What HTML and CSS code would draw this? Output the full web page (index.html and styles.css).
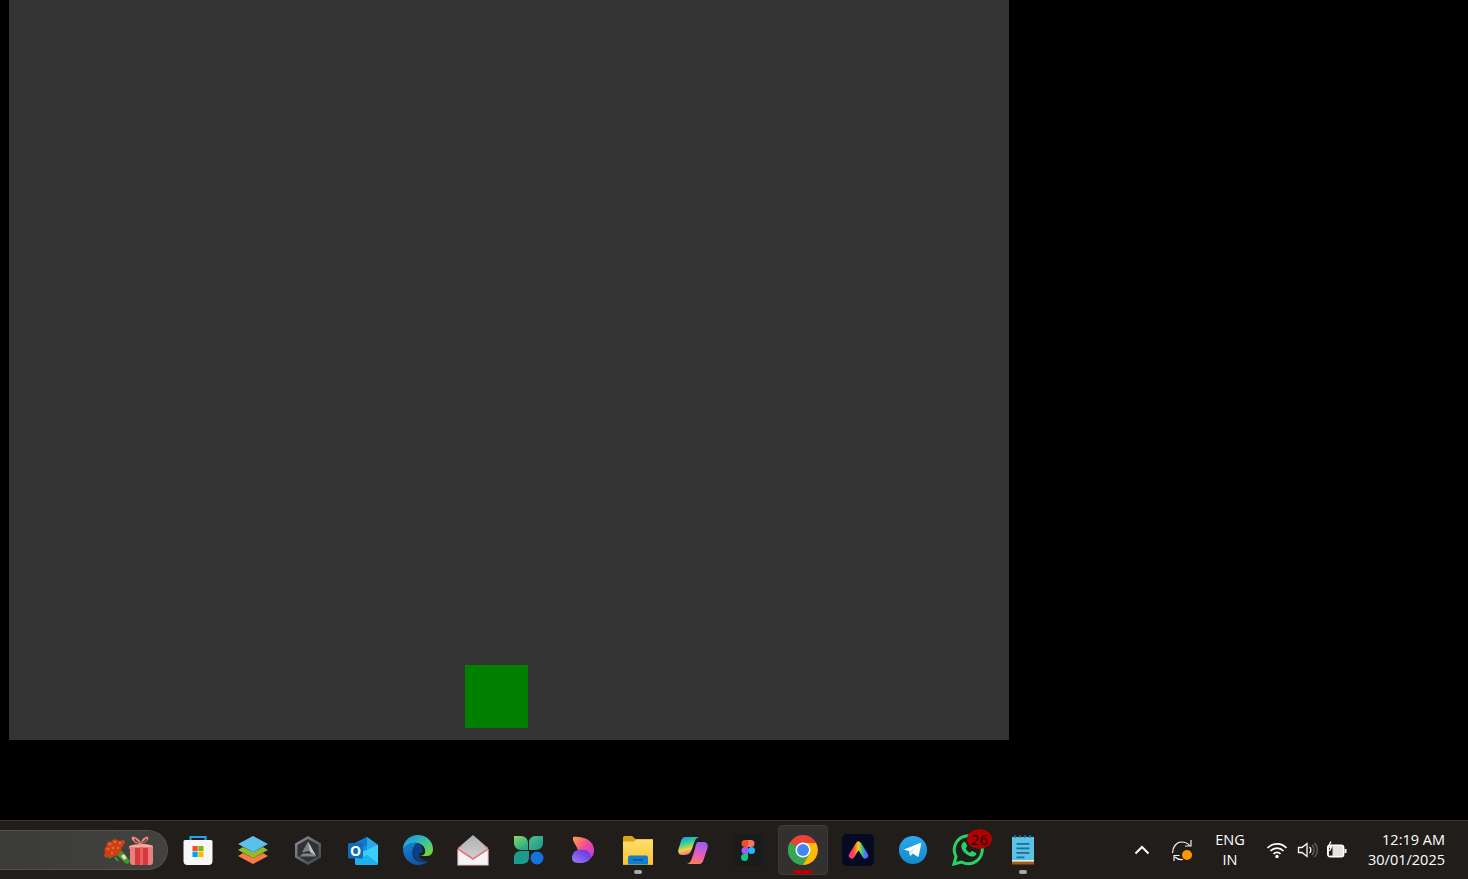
FILE: index.html
```html
<!DOCTYPE html>
<html lang="en">
<head>
<meta charset="utf-8">
<title>Desktop</title>
<link rel="stylesheet" href="styles.css">
</head>
<body>
<main class="screen">
  <div class="stage"><div class="player"></div></div>
</main>
<footer class="taskbar">
  <div class="search">
    <svg class="search-art" width="52" height="30" viewBox="0 0 52 30">
      <path d="M14 19l6-3 8 10 -2 3-3-1z" fill="#3f9b2f"/>
      <path d="M19 21l3-2 3 4-3 2z" fill="#efdcb4"/>
      <path d="M13 22l3 4M10 21l-3 2" stroke="#3f9b2f" stroke-width="2"/>
      <g fill="#cf3f1a">
        <circle cx="8" cy="10" r="3.500"/><circle cx="13" cy="8" r="3.700"/><circle cx="18" cy="9" r="3.500"/>
        <circle cx="6" cy="15" r="3.500"/><circle cx="11" cy="14" r="3.700"/><circle cx="16" cy="14" r="3.500"/>
        <circle cx="5" cy="20" r="2.800"/><circle cx="10" cy="19" r="3"/><circle cx="14" cy="18" r="2.800"/><circle cx="21" cy="7" r="2"/>
      </g>
      <g fill="#ee6a1f"><circle cx="8" cy="9" r="1.300"/><circle cx="13" cy="7" r="1.300"/><circle cx="18" cy="8" r="1.300"/><circle cx="6" cy="14" r="1.300"/><circle cx="11" cy="13" r="1.300"/><circle cx="16" cy="13" r="1.300"/><circle cx="10" cy="18" r="1.200"/></g>
      <path d="M39 8c-2-5-7-7-9-6-1 1 0 6 8 7 8-1 9-6 8-7-2-1-6 1-7 6z" fill="#e88f8a"/>
      <path d="M33 3c1 2 4 4 5 5-3 0-5-1-6-3zM44 3c-1 2-4 4-5 5 3 0 5-1 6-3z" fill="#8e3f3c"/>
      <path d="M27 11c5-2 18-3 24 0l-.500 3h-23z" fill="#f4a8a2"/>
      <path d="M28 12h23v15a3 3 0 0 1-3 3H31a3 3 0 0 1-3-3z" fill="#ea7f7c"/>
      <rect x="33" y="13" width="13" height="17" fill="#d63a3e"/>
      <rect x="38" y="12" width="3" height="18" fill="#e9605f"/>
    </svg>
  </div>
  <nav class="apps">
    <div class="app">
      <svg class="icon" width="32" height="32" viewBox="0 0 32 32">
        <path d="M8.500 7V3h15v4" fill="none" stroke="#1ea7e8" stroke-width="2"/>
        <path d="M3 6h26a1.500 1.500 0 0 1 1.500 1.500V27a4 4 0 0 1-4 4h-21a4 4 0 0 1-4-4V7.500A1.500 1.500 0 0 1 3 6z" fill="#f7f7f7"/>
        <rect x="10.500" y="12" width="5.200" height="5.200" fill="#f25022"/><rect x="16.300" y="12" width="5.200" height="5.200" fill="#7fba00"/>
        <rect x="10.500" y="17.800" width="5.200" height="5.200" fill="#00a4ef"/><rect x="16.300" y="17.800" width="5.200" height="5.200" fill="#ffb900"/>
      </svg>
    </div>
    <div class="app">
      <svg class="icon" width="32" height="32" viewBox="0 0 32 32">
        <path d="M1 22l5-3 10 5 10-5 5 3-15 8z" fill="#f97a47"/>
        <path d="M1 16l5-3 10 5 10-5 5 3-15 8z" fill="#8fbb2f"/>
        <path d="M16 2l15 8-15 8L1 10z" fill="#5cc0ec"/>
      </svg>
    </div>
    <div class="app">
      <svg class="icon" width="32" height="32" viewBox="0 0 32 32">
        <defs><linearGradient id="hx" x1="0" y1="0" x2="1" y2="1"><stop offset="0" stop-color="#8e9196"/><stop offset="0.600" stop-color="#5c5f64"/><stop offset="1" stop-color="#3c3e42"/></linearGradient></defs>
        <path d="M16 2l13 7.500v14L16 31 3 23.500v-14z" fill="url(#hx)"/>
        <path d="M16 5l10.500 6v11L16 28 5.500 22V11z" fill="#2f3135"/>
        <path d="M16 7.500l8 14.500-7-5-7 1.500z" fill="#7d8085"/>
        <path d="M16 7.500l8 14.500-6-4z" fill="#c4c6c9"/>
        <path d="M7.500 22.500H24l-3.500-3H11z" fill="#808388"/>
      </svg>
    </div>
    <div class="app">
      <svg class="icon" width="32" height="32" viewBox="0 0 32 32">
        <path d="M8 9L20 3l11 8v9H8z" fill="#1490df"/>
        <path d="M20 3l11 8v7H20z" fill="#28a8ea"/>
        <path d="M8 9l12-6v8L8 17z" fill="#0f78d4"/>
        <path d="M8 21l23-10v18a2 2 0 0 1-2 2H10a2 2 0 0 1-2-2z" fill="#3ccdf6"/>
        <path d="M8 26l12-5 11 8a2 2 0 0 1-2 2H10a2 2 0 0 1-2-2z" fill="#1fb0ec"/>
        <rect x="1" y="9" width="15" height="15.500" rx="1.500" fill="#0f6cbd"/>
        <text class="ol" x="8.500" y="21.500" text-anchor="middle">O</text>
      </svg>
    </div>
    <div class="app">
      <svg class="icon" width="32" height="32" viewBox="0 0 32 32">
        <defs>
          <linearGradient id="eg" x1="0.300" y1="0" x2="1" y2="0.700"><stop offset="0" stop-color="#1b9de2"/><stop offset="0.500" stop-color="#35c1a8"/><stop offset="1" stop-color="#6fd34a"/></linearGradient>
          <linearGradient id="eb" x1="0" y1="0" x2="0.700" y2="1"><stop offset="0" stop-color="#1a86d8"/><stop offset="1" stop-color="#0d4fa0"/></linearGradient>
        </defs>
        <path d="M16 1C7 1 1 8 1 15c4-5 9-7 14-6 6 1 9 5 8 10-.4 2-3 3-6 3h8c4 0 6-3 6-7C31 7 24 1 16 1z" fill="url(#eg)"/>
        <path d="M1 15c0 9 7 16 15 16 4 0 8-1.500 10-4-5 2-13 1-15-5-1.500-5 1-10 4-13C9 8 4 10 1 15z" fill="url(#eb)"/>
        <path d="M15 9c-3 2-5 6-4 11 1 6 9 9 15 7-4 0-9-2-9-6 0-2 2-3 4-3l-1-5c-1-2-3-4-5-4z" fill="#0b3f87"/>
      </svg>
    </div>
    <div class="app">
      <svg class="icon" width="32" height="32" viewBox="0 0 32 32">
        <defs><linearGradient id="mf" x1="0" y1="0" x2="0" y2="1"><stop offset="0" stop-color="#b0b0b0"/><stop offset="1" stop-color="#d8d8d8"/></linearGradient></defs>
        <path d="M16 1l15 13v17H1V14z" fill="url(#mf)"/>
        <path d="M1 15l15 10 15-10v16H1z" fill="#f4f4f4"/>
        <path d="M1 15v16h30V15" fill="none" stroke="#ecc5c5" stroke-width="1.200"/>
        <path d="M1 15l15 10 15-10" fill="none" stroke="#e8777b" stroke-width="1.700"/>
        <path d="M1.500 14l3-2M30.500 14l-3-2" stroke="#e8777b" stroke-width="1.200"/>
      </svg>
    </div>
    <div class="app">
      <svg class="icon" width="32" height="32" viewBox="0 0 32 32">
        <defs>
          <linearGradient id="bl" x1="0" y1="0" x2="0.600" y2="1"><stop offset="0" stop-color="#8bd860"/><stop offset="1" stop-color="#26a88a"/></linearGradient>
          <linearGradient id="br" x1="0" y1="0" x2="1" y2="1"><stop offset="0" stop-color="#4fc08a"/><stop offset="1" stop-color="#1a9490"/></linearGradient>
        </defs>
        <path d="M2 2h7c4 0 7 3 7 7v7H9c-4 0-7-3-7-7z" fill="url(#bl)"/>
        <path d="M17 16V8c0-3 3-6 6-6h8v7c0 4-3 7-7 7z" fill="url(#br)"/>
        <path d="M2 30v-6c0-5 3-7 7-7h8v6c0 5-3 7-8 7z" fill="#1c9a8e"/>
        <circle cx="25" cy="24" r="6.500" fill="#1573e0"/>
      </svg>
    </div>
    <div class="app">
      <svg class="icon" width="32" height="32" viewBox="0 0 32 32">
        <defs>
          <linearGradient id="ct" x1="0" y1="0" x2="1" y2="0.800"><stop offset="0" stop-color="#ffa14a"/><stop offset="0.600" stop-color="#f0479a"/><stop offset="1" stop-color="#c13fe0"/></linearGradient>
          <linearGradient id="cb" x1="0" y1="1" x2="1" y2="0"><stop offset="0" stop-color="#9b7cf5"/><stop offset="1" stop-color="#5a2fe0"/></linearGradient>
        </defs>
        <path d="M6 3c8-1 20 2 21 12 .5 4-1 7-3 9-1-5-7-7-13-7C10 11 5 8 6 3z" fill="url(#ct)"/>
        <path d="M11 16c7-1 13 1 13 8-2 3-6 5-11 5-5 0-8-1-8-5 0-4 2-7 6-8z" fill="url(#cb)"/>
      </svg>
    </div>
    <div class="app">
      <svg class="icon" width="32" height="32" viewBox="0 0 32 32">
        <defs><linearGradient id="ff" x1="0" y1="0" x2="0" y2="1"><stop offset="0" stop-color="#ffdf6a"/><stop offset="1" stop-color="#fcc233"/></linearGradient></defs>
        <path d="M1 3.500A1.500 1.500 0 0 1 2.500 2H10l4 3.500h-13z" fill="#dba412"/>
        <rect x="1" y="5" width="30" height="26" fill="#d9a312"/>
        <path d="M1 7.500h11l2-2h17V30.500H1z" fill="url(#ff)"/>
        <path d="M6 30.500v-7a2 2 0 0 1 2-2h16a2 2 0 0 1 2 2v7z" fill="#0f7fd0"/>
        <rect x="11" y="25" width="10" height="1.600" fill="#08508f"/>
      </svg>
      <span class="dot"></span>
    </div>
    <div class="app">
      <svg class="icon" width="32" height="32" viewBox="0 0 32 32">
        <defs>
          <linearGradient id="ma" x1="0" y1="0" x2="0.300" y2="1"><stop offset="0" stop-color="#1f8ff5"/><stop offset="0.400" stop-color="#2fcf9c"/><stop offset="0.750" stop-color="#f5d23d"/><stop offset="1" stop-color="#f0709a"/></linearGradient>
          <linearGradient id="mb" x1="0.600" y1="0" x2="0.400" y2="1"><stop offset="0" stop-color="#9a5cf5"/><stop offset="0.550" stop-color="#e85cc0"/><stop offset="1" stop-color="#f5805c"/></linearGradient>
        </defs>
        <path d="M21 8h6c3 0 4.500 3 3.500 6l-4 12c-.6 2-2 4-4 4H10c3-1 4-3 5-6l2-6c1-3 2-10 4-10z" fill="url(#mb)"/>
        <path d="M8 3h14c-3 1-4 3-5 6l-2 6c-1 3-3 6-7 6H5c-3 0-4.500-3-3.500-6L4 7c.6-2 2-4 4-4z" fill="url(#ma)"/>
      </svg>
    </div>
    <div class="app">
      <svg class="icon" width="32" height="32" viewBox="0 0 32 32">
        <rect width="32" height="32" rx="3" fill="#1b1b1b"/>
        <path d="M16 6h-3a3.500 3.500 0 0 0 0 7h3z" fill="#f24e1e"/>
        <path d="M16 6h3a3.500 3.500 0 0 1 0 7h-3z" fill="#ff7262"/>
        <path d="M16 13h-3a3.500 3.500 0 0 0 0 7h3z" fill="#a259ff"/>
        <circle cx="19.500" cy="16.500" r="3.500" fill="#1abcfe"/>
        <path d="M16 20h-3a3.500 3.500 0 1 0 3 3.500z" fill="#0acf83"/>
      </svg>
    </div>
    <div class="app active">
      <svg class="icon" width="32" height="32" viewBox="0 0 32 32">
        <circle cx="16" cy="16" r="15" fill="#ea4335"/>
        <path d="M16 16L3 8.500A15 15 0 0 0 16 31l7.500-13z" fill="#34a853"/>
        <path d="M16 9h13a15 15 0 0 1-13 22l7.500-13z" fill="#fbbc04"/>
        <circle cx="16" cy="16" r="7.500" fill="#fff"/>
        <circle cx="16" cy="16" r="6" fill="#4285f4"/>
      </svg>
      <span class="bar"></span>
    </div>
    <div class="app">
      <svg class="icon" width="32" height="32" viewBox="0 0 32 32">
        <defs><linearGradient id="ae" gradientUnits="userSpaceOnUse" x1="7" y1="16" x2="26" y2="16"><stop offset="0" stop-color="#f0309c"/><stop offset="0.250" stop-color="#ff4a3a"/><stop offset="0.500" stop-color="#ffc52e"/><stop offset="0.650" stop-color="#4ad25a"/><stop offset="0.820" stop-color="#2f8cff"/><stop offset="1" stop-color="#a03cf0"/></linearGradient></defs>
        <rect width="32" height="32" rx="5" fill="#040a22"/>
        <path d="M9.800 21.500L16.500 10.500 23.200 21.500" fill="none" stroke="url(#ae)" stroke-width="6" stroke-linejoin="round" stroke-linecap="round"/>
        <path d="M16.500 19l2.500 5h-5z" fill="#040a22"/>
      </svg>
    </div>
    <div class="app">
      <svg class="icon" width="32" height="32" viewBox="0 0 32 32">
        <defs><linearGradient id="tg" x1="0" y1="0" x2="0" y2="1"><stop offset="0" stop-color="#2aabee"/><stop offset="1" stop-color="#1488c8"/></linearGradient></defs>
        <circle cx="16" cy="16" r="14" fill="url(#tg)"/>
        <path d="M7 15.500l16-6.500c.8-.3 1.400.2 1.200 1l-2.500 12c-.2.800-.8 1-1.500.6l-4.300-3.200-2.200 2.100c-.4.400-.8.200-.9-.3l-.8-4.300-4.500-1.200c-.8-.2-.8-.9-.5-1.200z" fill="#fff"/>
        <path d="M12.500 17.200l7-4.700-5 6 -.6 3.500z" fill="#d5e8f5"/>
      </svg>
    </div>
    <div class="app">
      <svg class="icon" width="32" height="32" viewBox="0 0 32 32">
        <path d="M2 30l2-7.500A14 14 0 1 1 9.500 28z" fill="none" stroke="#25d366" stroke-width="3"/>
        <path d="M11 8.500c1-1 2-1 2.500 0l1.500 3c.3.600 0 1.200-.5 1.700l-1 1c.9 2 2.500 3.600 4.500 4.500l1.200-1.200c.5-.4 1-.6 1.600-.3l2.800 1.500c.9.500.9 1.500 0 2.500-1.500 1.600-3.500 1.800-6 .8-4-1.600-7-4.600-8-8-.6-2 0-4 1.400-5.500z" fill="#25d366"/>
      </svg>
      <span class="badge">26</span>
    </div>
    <div class="app">
      <svg class="icon" width="32" height="32" viewBox="0 0 32 32">
        <rect x="5" y="3" width="22" height="27" fill="#5cc3e6"/>
        <rect x="5" y="27.500" width="22" height="3" fill="#a55a1e"/>
        <rect x="5" y="26" width="22" height="1.500" fill="#f0e7c8"/>
        <g fill="#1c6f96"><circle cx="8" cy="2.500" r="1.300"/><circle cx="13" cy="2.500" r="1.300"/><circle cx="18" cy="2.500" r="1.300"/><circle cx="23" cy="2.500" r="1.300"/>
        <rect x="9.500" y="9" width="13" height="1.800"/><rect x="9.500" y="13.500" width="13" height="1.800"/><rect x="9.500" y="18" width="13" height="1.800"/><rect x="9.500" y="22.500" width="8" height="1.800"/></g>
      </svg>
      <span class="dot"></span>
    </div>
  </nav>
  <div class="tray">
    <svg class="chev" width="16" height="10" viewBox="0 0 16 10"><path d="M1.500 8.500L8 2l6.500 6.500" fill="none" stroke="#fff" stroke-width="2"/></svg>
    <svg class="sync" width="24" height="24" viewBox="0 0 24 24">
      <path d="M1.500 15c0-6 4-11 9-11 3.500 0 6 1 8 3.500M20 2v6h-6" fill="none" stroke="#f2f2f2" stroke-width="1.200"/>
      <path d="M12 21.500c-3 .5-6-.5-8-2.500M3 23v-5.500h5.500" fill="none" stroke="#f2f2f2" stroke-width="1.200"/>
      <circle cx="16" cy="17" r="5" fill="#ff9800"/>
    </svg>
    <div class="lang"><span>ENG</span><span>IN</span></div>
    <div class="status">
      <svg class="wifi" width="22" height="18" viewBox="0 0 22 18"><path d="M1.500 7a13 13 0 0 1 19 0M4.500 10a9 9 0 0 1 13 0M7.500 13a4.500 4.500 0 0 1 7 0" fill="none" stroke="#fff" stroke-width="1.700"/><circle cx="11" cy="15.500" r="1.700" fill="#fff"/></svg>
      <svg width="22" height="18" viewBox="0 0 22 18"><path d="M1.500 6.500h3.500l5-4v13l-5-4H1.500z" fill="none" stroke="#fff" stroke-width="1.300"/><path d="M12.500 6a4 4 0 0 1 0 6" fill="none" stroke="#fff" stroke-width="1.300"/><path d="M15 4a7 7 0 0 1 0 10M17.500 2a10 10 0 0 1 0 14" fill="none" stroke="#6b6b6b" stroke-width="1.200"/></svg>
      <svg width="22" height="18" viewBox="0 0 22 18"><rect x="1.700" y="4.200" width="16" height="11.600" rx="2.500" fill="#e4e4e4" stroke="#fff" stroke-width="1.400"/><rect x="3" y="5.500" width="3.500" height="9" fill="#201d1a"/><rect x="18.500" y="8" width="2" height="4" fill="#fff"/><path d="M5 .5L2 6h3.500L3.500 10" fill="none" stroke="#fff" stroke-width="1.300"/></svg>
    </div>
    <div class="clock"><span>12:19 AM</span><span>30/01/2025</span></div>
  </div>
</footer>
</body>
</html>
```
FILE: styles.css
```css
* { box-sizing: border-box; }
html, body { height: 100%; }
body {
  margin: 0;
  display: flex;
  flex-direction: column;
  background: #000;
  overflow: hidden;
  font-family: "Open Sans", "Noto Sans", sans-serif;
  color: #fff;
}
.screen { flex: 1; min-height: 0; padding-left: 9px; }
.stage {
  position: relative;
  width: 1000px;
  height: 740px;
  background: #333;
}
.player {
  position: absolute;
  left: 456px;
  top: 665px;
  width: 63px;
  height: 63px;
  background: #008000;
}
.taskbar {
  height: 59px;
  flex: none;
  display: flex;
  align-items: center;
  background: #201d1a;
  border-top: 1px solid #3a3835;
}
.search {
  width: 168px;
  height: 40px;
  flex: none;
  display: flex;
  justify-content: flex-end;
  align-items: center;
  padding-right: 13px;
  background: linear-gradient(90deg, #3b3c38, #42423e);
  border: 1px solid #51514d;
  border-left: 0;
  border-radius: 0 20px 20px 0;
}
.apps { display: flex; gap: 5px; margin-left: 5px; }
.app {
  position: relative;
  width: 50px;
  height: 50px;
  display: flex;
  align-items: center;
  justify-content: center;
  border-radius: 4px;
}
.app.active { background: #33312f; border: 1px solid #3d3b39; }
.dot {
  position: absolute;
  bottom: 1px;
  left: 21px;
  width: 8px;
  height: 4px;
  border-radius: 2px;
  background: #a8a8a8;
}
.bar {
  position: absolute;
  bottom: 0;
  left: 14px;
  width: 20px;
  height: 4px;
  border-radius: 2px;
  background: #b30000;
}
.badge {
  position: absolute;
  top: 4px;
  left: 24px;
  width: 25px;
  height: 20px;
  border-radius: 50%;
  background: #b00000;
  color: #1a0505;
  font-size: 15px;
  line-height: 20px;
  text-align: center;
}
.ol { font-size: 14px; font-weight: 700; fill: #fff; }
.tray {
  margin-left: auto;
  display: flex;
  align-items: center;
  padding-right: 23px;
  font-size: 14.500px;
  line-height: 20px;
}
.chev { margin-right: 21px; }
.sync { margin-right: 19px; }
.lang, .clock { display: flex; flex-direction: column; }
.lang { align-items: center; width: 32px; margin-right: 20px; }
.status { display: flex; gap: 7px; margin-right: 20px; }
.wifi { margin-right: 2px; }
.clock { align-items: flex-end; }
```
